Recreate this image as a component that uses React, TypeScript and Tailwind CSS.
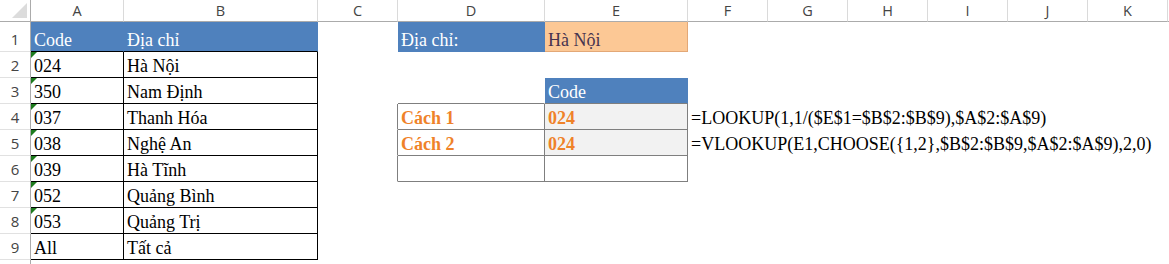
import React from 'react';

type CellSpec = {
  t?: string;
  c?: string;
  r?: string;
  b?: string;
  tri?: boolean;
};

const COLS = ['A', 'B', 'C', 'D', 'E', 'F', 'G', 'H', 'I', 'J', 'K'];
const ROWS = [1, 2, 3, 4, 5, 6, 7, 8, 9, 10];

const BLUE = 'bg-[#4f81bd] text-white';
const ORANGE = 'font-bold text-[#ef8229]';

const codes: [string, string][] = [
  ['024', 'Hà Nội'],
  ['350', 'Nam Định'],
  ['037', 'Thanh Hóa'],
  ['038', 'Nghệ An'],
  ['039', 'Hà Tĩnh'],
  ['052', 'Quảng Bình'],
  ['053', 'Quảng Trị'],
  ['All', 'Tất cả'],
];

const cells: Record<string, CellSpec> = {
  A1: { t: 'Code', c: BLUE, b: 'border-b-black' },
  B1: { t: 'Địa chỉ', c: BLUE, b: 'border-b-black' },
  D1: { t: 'Địa chỉ:', c: BLUE },
  E1: { t: 'Hà Nội', c: 'bg-[#fcc895] text-[#47344f]', r: 'border-r-[#e3a877]', b: 'border-b-[#e3a877]' },
  D3: { b: 'border-b-[#7f7f7f]' },
  E3: { t: 'Code', c: BLUE, b: 'border-b-[#7f7f7f]' },
  C4: { r: 'border-r-[#7f7f7f]' },
  C5: { r: 'border-r-[#7f7f7f]' },
  C6: { r: 'border-r-[#7f7f7f]' },
  D4: { t: 'Cách 1', c: ORANGE, r: 'border-r-[#7f7f7f]', b: 'border-b-[#7f7f7f]' },
  D5: { t: 'Cách 2', c: ORANGE, r: 'border-r-[#7f7f7f]', b: 'border-b-[#7f7f7f]' },
  D6: { r: 'border-r-[#7f7f7f]', b: 'border-b-[#7f7f7f]' },
  E4: { t: '024', c: ORANGE + ' bg-[#f2f2f2]', r: 'border-r-[#7f7f7f]', b: 'border-b-[#7f7f7f]' },
  E5: { t: '024', c: ORANGE + ' bg-[#f2f2f2]', r: 'border-r-[#7f7f7f]', b: 'border-b-[#7f7f7f]' },
  E6: { r: 'border-r-[#7f7f7f]', b: 'border-b-[#7f7f7f]' },
  F4: { t: '=LOOKUP(1,1/($E$1=$B$2:$B$9),$A$2:$A$9)' },
  F5: { t: '=VLOOKUP(E1,CHOOSE({1,2},$B$2:$B$9,$A$2:$A$9),2,0)' },
};

codes.forEach(([code, place], i) => {
  const row = i + 2;
  cells[`A${row}`] = { t: code, r: 'border-r-black', b: 'border-b-black', tri: code !== 'All' };
  cells[`B${row}`] = { t: place, r: 'border-r-black', b: 'border-b-black' };
});

const Cell = ({ spec }: { spec?: CellSpec }) => (
  <div
    className={`relative flex items-end whitespace-nowrap border-r border-b pl-[3px] pb-[1px] font-['Liberation_Serif',serif] text-[18px] leading-[20px] ${
      spec?.r ?? 'border-r-transparent'
    } ${spec?.b ?? 'border-b-transparent'} ${spec?.c ?? 'text-black'}`}
  >
    {spec?.tri && (
      <span className="absolute left-0 top-0 border-t-[6px] border-r-[6px] border-t-[#1d7b1d] border-r-transparent" />
    )}
    {spec?.t}
  </div>
);

export default function App() {
  return (
    <div className="h-[264px] w-[1169px] overflow-hidden bg-white">
      <div className="grid grid-cols-[31px_93px_194px_80px_147px_143px_80px_80px_80px_80px_80px_80px_1px] grid-rows-[22px_30px_repeat(8,26px)_20px]">
        {/* corner */}
        <div className="border-r border-b border-r-[#ababab] border-b-[#ababab]">
          <svg width="30" height="21" viewBox="0 0 30 21">
            <polygon points="12,18 27,18 27,3" fill="#dcdcdc" />
          </svg>
        </div>
        {COLS.map((col) => (
          <div
            key={col}
            className="flex items-center justify-center border-r border-b border-r-[#dadada] border-b-[#ababab] font-['Open_Sans',sans-serif] text-[14.5px] text-[#444]"
          >
            {col}
          </div>
        ))}
        <div className="border-b border-b-[#ababab]" />

        {ROWS.map((row) => (
          <React.Fragment key={row}>
            <div className="flex items-end justify-center border-r border-b border-r-[#ababab] border-b-[#e1e1e1] pb-[3px] font-['Open_Sans',sans-serif] text-[15px] leading-[18px] text-[#444]">
              {row < 10 ? row : ''}
            </div>
            {COLS.map((col) => (
              <Cell key={col} spec={cells[`${col}${row}`]} />
            ))}
            <div />
          </React.Fragment>
        ))}
      </div>
    </div>
  );
}
